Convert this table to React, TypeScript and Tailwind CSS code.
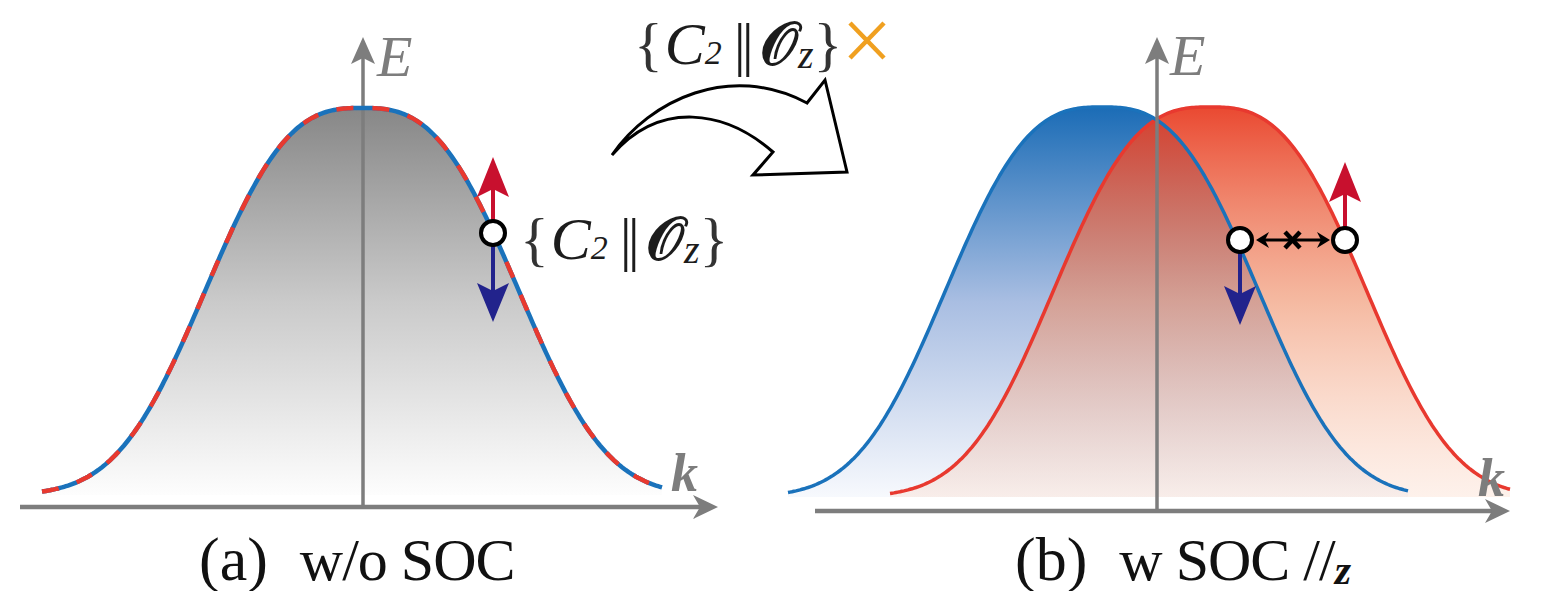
import React from 'react';

// super-gaussian band shape, roughly what the figure uses
const S = 184;
const N = 2.8;

function bandY(x: number, cx: number, base: number, amp: number) {
  const dx = Math.abs(x - cx) / S;
  return base - amp * Math.exp(-Math.pow(dx, N));
}

function bandPath(cx: number, base: number, amp: number, x0: number, x1: number, close = false) {
  const pts: string[] = [];
  for (let x = x0; x <= x1; x += 2) {
    pts.push(`${x.toFixed(1)},${bandY(x, cx, base, amp).toFixed(1)}`);
  }
  let d = 'M' + pts.join(' L');
  if (close) d += ` L${x1},${base} L${x0},${base} Z`;
  return d;
}

const curveA = bandPath(362, 495, 387, 42, 662);
const fillA = bandPath(362, 495, 387, 42, 662, true);
const blueB = bandPath(1102, 497, 390, 788, 1408);
const blueFillB = bandPath(1102, 497, 390, 788, 1408, true);
const redB = bandPath(1210, 497, 390, 890, 1510);
const redFillB = bandPath(1210, 497, 390, 890, 1510, true);

const SERIF = "font-['Liberation_Serif','Times_New_Roman','DejaVu_Serif',serif]";

const Formula: React.FC<{ className: string }> = ({ className }) => (
  <div className={`absolute leading-none text-[60px] text-[#1c1c1c] whitespace-nowrap ${SERIF} ${className}`}>
    <span className="font-light text-[#333]">{'{'}</span>
    <span className="italic ml-[2px]">C</span>
    <span className="italic text-[34px]">2</span>
    <span className="ml-[12px] tracking-[-4px]">||</span>
    <span className="ml-[10px] font-bold">𝒪</span>
    <span className="italic text-[40px] relative top-[4px]">z</span>
    <span className="font-light text-[#333]">{'}'}</span>
  </div>
);

const Panels: React.FC = () => (
  <svg className="absolute inset-0" width="1556" height="525" viewBox="0 0 1556 525">
    <defs>
      <linearGradient id="gGray" x1="0" y1="0" x2="0" y2="1">
        <stop offset="0" stopColor="#878787" />
        <stop offset="0.5" stopColor="#cacaca" />
        <stop offset="1" stopColor="#fdfdfd" />
      </linearGradient>
      <linearGradient id="gBlue" x1="0" y1="0" x2="0" y2="1">
        <stop offset="0" stopColor="#1b6cb6" />
        <stop offset="0.5" stopColor="#a9bee2" />
        <stop offset="1" stopColor="#f7f9fd" />
      </linearGradient>
      <linearGradient id="gRed" x1="0" y1="0" x2="0" y2="1">
        <stop offset="0" stopColor="#e8391f" stopOpacity="0.92" />
        <stop offset="0.5" stopColor="#ef8f68" stopOpacity="0.62" />
        <stop offset="1" stopColor="#fbd8c6" stopOpacity="0.35" />
      </linearGradient>
    </defs>

    {/* panel a */}
    <path d={fillA} fill="url(#gGray)" />
    <line x1="363" y1="507" x2="363" y2="58" stroke="#7d7d7d" strokeWidth="3.5" />
    <polygon points="363,37 351,64 363,58 375,64" fill="#7d7d7d" />
    <path d={curveA} fill="none" stroke="#1a72bb" strokeWidth="4.5" />
    <path d={curveA} fill="none" stroke="#e8392f" strokeWidth="4.5" strokeDasharray="17 19" />
    <line x1="20" y1="507" x2="702" y2="507" stroke="#7d7d7d" strokeWidth="4.5" />
    <polygon points="718,507 693,495 700,507 693,519" fill="#7d7d7d" />
    <text x="671" y="491" fontSize="54" fontWeight="bold" fontStyle="italic" fill="#7d7d7d" fontFamily="Liberation Serif, serif">k</text>
    <text x="377" y="76" fontSize="58" fontStyle="italic" fill="#7d7d7d" fontFamily="Liberation Serif, serif">E</text>

    {/* spin arrows a */}
    <line x1="493" y1="188" x2="493" y2="222" stroke="#c8102e" strokeWidth="4" />
    <polygon points="493,157 477,197 493,189 509,197" fill="#c8102e" />
    <line x1="493" y1="244" x2="493" y2="292" stroke="#22238c" strokeWidth="4" />
    <polygon points="493,322 477,283 493,291 509,283" fill="#22238c" />
    <circle cx="493" cy="233" r="12" fill="#fff" stroke="#000" strokeWidth="4" />

    {/* curved arrow */}
    <path
      d="M612,155 C650,100 730,62 807,103 L825,80 L847,172 L753,175 L773,152 C725,110 660,100 612,155 Z"
      fill="#fff"
      stroke="#000"
      strokeWidth="3"
      strokeLinejoin="miter"
    />
    <line x1="850" y1="23" x2="884" y2="58" stroke="#f0a020" strokeWidth="4.5" />
    <line x1="884" y1="23" x2="850" y2="58" stroke="#f0a020" strokeWidth="4.5" />

    {/* panel b */}
    <path d={blueFillB} fill="url(#gBlue)" />
    <path d={redFillB} fill="url(#gRed)" />
    <path d={redB} fill="none" stroke="#e8392f" strokeWidth="3.5" />
    <path d={blueB} fill="none" stroke="#1a72bb" strokeWidth="3.5" />
    <line x1="1157" y1="511" x2="1157" y2="58" stroke="#7d7d7d" strokeWidth="3.5" />
    <polygon points="1157,37 1145,64 1157,58 1169,64" fill="#7d7d7d" />
    <line x1="815" y1="511" x2="1494" y2="511" stroke="#7d7d7d" strokeWidth="4.5" />
    <polygon points="1510,511 1485,499 1492,511 1485,523" fill="#7d7d7d" />
    <text x="1478" y="496" fontSize="54" fontWeight="bold" fontStyle="italic" fill="#7d7d7d" fontFamily="Liberation Serif, serif">k</text>
    <text x="1170" y="75" fontSize="58" fontStyle="italic" fill="#7d7d7d" fontFamily="Liberation Serif, serif">E</text>

    {/* spin arrows b */}
    <line x1="1345" y1="193" x2="1345" y2="228" stroke="#c8102e" strokeWidth="4" />
    <polygon points="1345,162 1329,202 1345,194 1361,202" fill="#c8102e" />
    <line x1="1240" y1="252" x2="1240" y2="295" stroke="#22238c" strokeWidth="4" />
    <polygon points="1240,325 1224,286 1240,294 1256,286" fill="#22238c" />

    {/* blocked coupling */}
    <line x1="1262" y1="240" x2="1324" y2="240" stroke="#000" strokeWidth="3" />
    <polygon points="1256,240 1269,232 1265,240 1269,248" fill="#000" />
    <polygon points="1330,240 1317,232 1321,240 1317,248" fill="#000" />
    <line x1="1285" y1="232" x2="1300" y2="248" stroke="#000" strokeWidth="4.5" />
    <line x1="1300" y1="232" x2="1285" y2="248" stroke="#000" strokeWidth="4.5" />
    <circle cx="1240" cy="240" r="12" fill="#fff" stroke="#000" strokeWidth="4" />
    <circle cx="1345" cy="240" r="12" fill="#fff" stroke="#000" strokeWidth="4" />
  </svg>
);

export default function App() {
  return (
    <div className={`w-[1556px] h-[591px] bg-white overflow-hidden flex flex-col ${SERIF}`}>
      <div className="relative h-[525px] shrink-0">
        <Panels />
        <Formula className="left-[520px] top-[209px]" />
        <Formula className="left-[634px] top-[14px]" />
      </div>

      {/* captions */}
      <div className="flex pt-[3px] leading-none text-[60px] text-[#111] whitespace-nowrap">
        <div className="w-[770px] shrink-0 pl-[199px]">
          <span className="text-[62px]">(a)</span>
          <span className="ml-[32px] tracking-[-1px]">w/o SOC</span>
        </div>
        <div className="pl-[245px]">
          <span className="text-[62px]">(b)</span>
          <span className="ml-[32px] tracking-[-1px]">w SOC //</span>
          <span className="text-[42px] font-bold italic relative top-[4px]">z</span>
        </div>
      </div>
    </div>
  );
}
